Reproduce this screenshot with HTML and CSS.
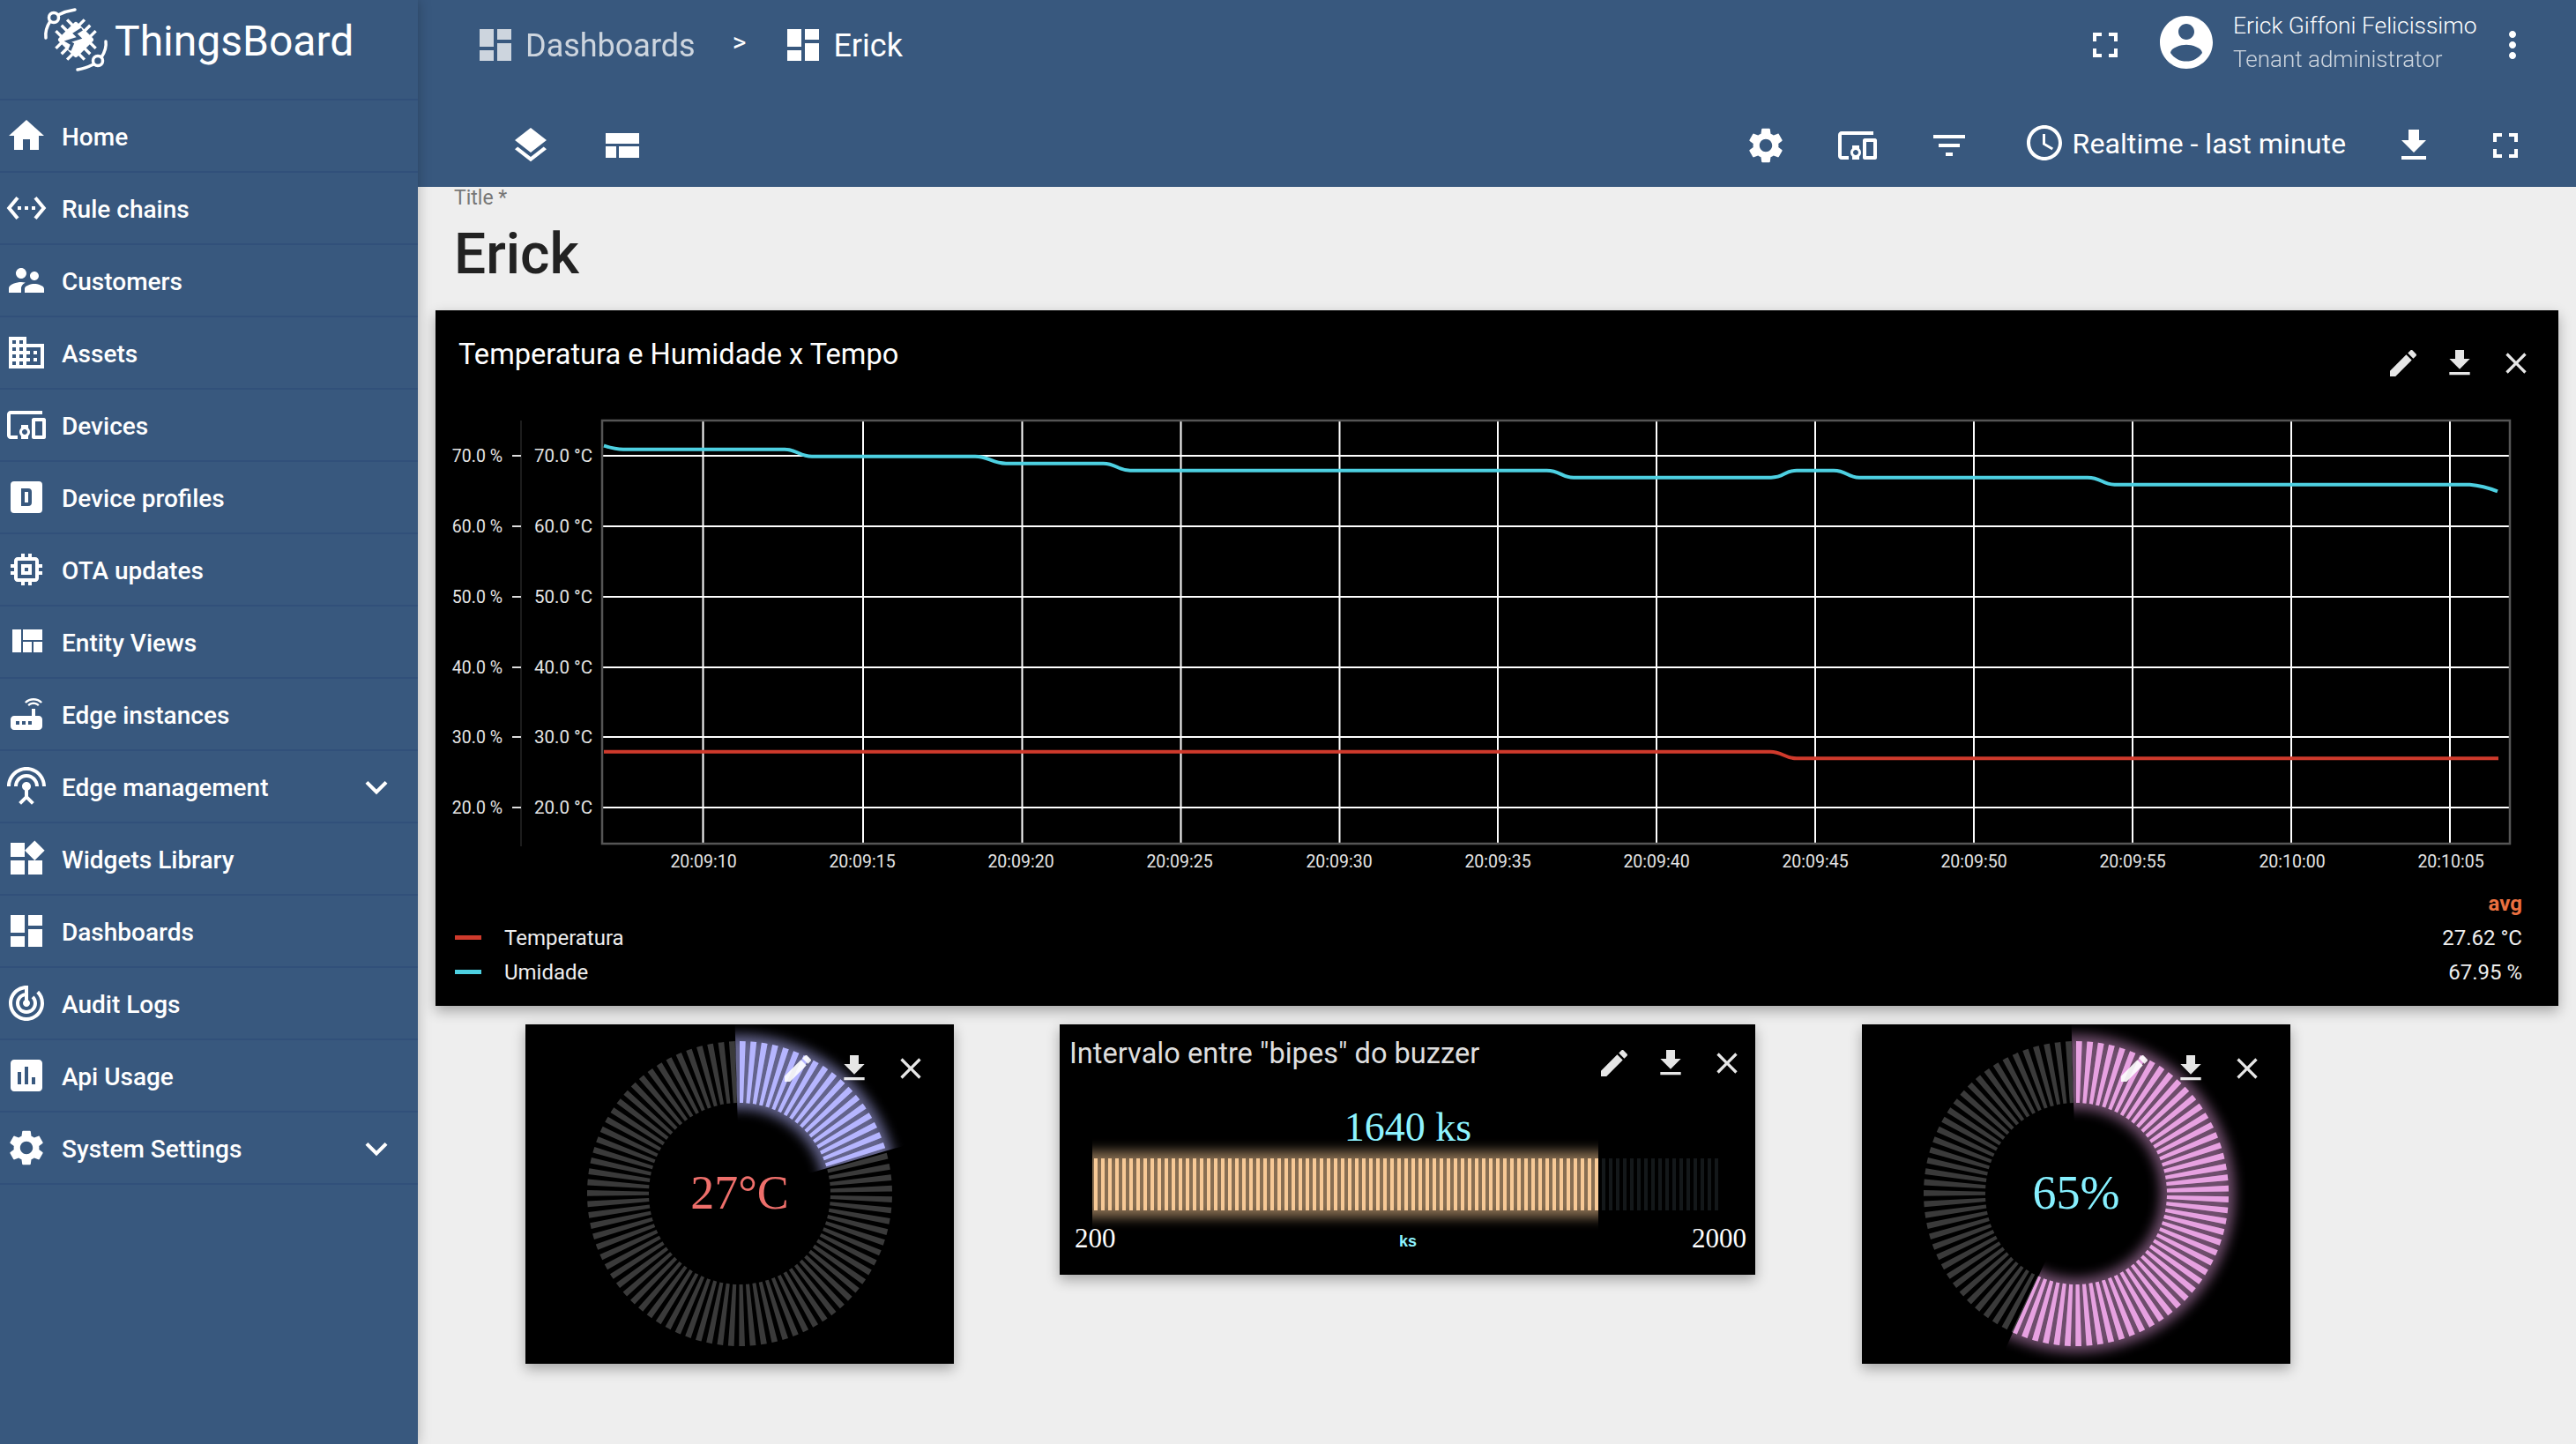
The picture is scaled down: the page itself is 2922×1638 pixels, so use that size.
FILE: index.html
```html
<!DOCTYPE html>
<html lang="en">
<head>
    <meta charset="UTF-8">
    <title>ThingsBoard | Erick</title>
    <link rel="stylesheet" href="styles.css">
</head>
<body>
    <!-- Material icons used across the page -->
    <svg class="sprite" xmlns="http://www.w3.org/2000/svg">
        <symbol id="i-home" viewBox="0 0 24 24"><path d="M10 20v-6h4v6h5v-8h3L12 3 2 12h3v8z"/></symbol>
        <symbol id="i-rule" viewBox="0 0 24 24"><path d="M7.77 6.76L6.23 5.48.82 12l5.41 6.52 1.54-1.28L3.42 12l4.35-5.24zM7 13h2v-2H7v2zm10-2h-2v2h2v-2zm-6 2h2v-2h-2v2zm6.77-7.52l-1.54 1.28L20.58 12l-4.35 5.24 1.54 1.28L23.18 12l-5.41-6.52z"/></symbol>
        <symbol id="i-customers" viewBox="0 0 24 24"><path d="M16.5 12c1.38 0 2.49-1.12 2.49-2.5S17.88 7 16.5 7C15.12 7 14 8.12 14 9.5s1.12 2.5 2.5 2.5zM9 11c1.66 0 2.99-1.34 2.99-3S10.66 5 9 5C7.34 5 6 6.34 6 8s1.34 3 3 3zm7.5 3c-1.83 0-5.5.92-5.5 2.75V19h11v-2.25c0-1.83-3.67-2.75-5.5-2.75zM9 13c-2.33 0-7 1.17-7 3.5V19h7v-2.25c0-.85.33-2.34 2.37-3.47C10.5 13.1 9.66 13 9 13z"/></symbol>
        <symbol id="i-assets" viewBox="0 0 24 24"><path d="M12 7V3H2v18h20V7H12zM6 19H4v-2h2v2zm0-4H4v-2h2v2zm0-4H4V9h2v2zm0-4H4V5h2v2zm4 12H8v-2h2v2zm0-4H8v-2h2v2zm0-4H8V9h2v2zm0-4H8V5h2v2zm10 12h-8v-2h2v-2h-2v-2h2v-2h-2V9h8v10zm-2-8h-2v2h2v-2zm0 4h-2v2h2v-2z"/></symbol>
        <symbol id="i-devices" viewBox="0 0 24 24"><path d="M3 6h18V4H3c-1.1 0-2 .9-2 2v12c0 1.1.9 2 2 2h4v-2H3V6zm10 6H9v1.78c-.61.55-1 1.33-1 2.22s.39 1.67 1 2.22V20h4v-1.78c.61-.55 1-1.34 1-2.22s-.39-1.67-1-2.22V12zm-2 5.5c-.83 0-1.5-.67-1.5-1.5s.67-1.5 1.5-1.5 1.5.67 1.5 1.5-.67 1.5-1.5 1.5zM22 8h-6c-.5 0-1 .5-1 1v10c0 .5.5 1 1 1h6c.5 0 1-.5 1-1V9c0-.5-.5-1-1-1zm-1 10h-4v-8h4v8z"/></symbol>
        <symbol id="i-profile" viewBox="0 0 24 24"><path d="M9,7V17H13A2,2 0 0,0 15,15V9A2,2 0 0,0 13,7H9M11,9H13V15H11V9M5,3H19A2,2 0 0,1 21,5V19A2,2 0 0,1 19,21H5A2,2 0 0,1 3,19V5A2,2 0 0,1 5,3Z"/></symbol>
        <symbol id="i-memory" viewBox="0 0 24 24"><path d="M15 9H9v6h6V9zm-2 4h-2v-2h2v2zm8-2V9h-2V7c0-1.1-.9-2-2-2h-2V3h-2v2h-2V3H9v2H7c-1.1 0-2 .9-2 2v2H3v2h2v2H3v2h2v2c0 1.1.9 2 2 2h2v2h2v-2h2v2h2v-2h2c1.1 0 2-.9 2-2v-2h2v-2h-2v-2h2zm-4 6H7V7h10v10z"/></symbol>
        <symbol id="i-quilt" viewBox="0 0 24 24"><path d="M10 18h5v-6h-5v6zm-6 0h5V5H4v13zm12 0h5v-6h-5v6zM10 5v6h11V5H10z"/></symbol>
        <symbol id="i-router" viewBox="0 0 24 24"><path d="M20.2 5.9l.8-.8C19.6 3.7 17.8 3 16 3s-3.6.7-5 2.1l.8.8C13 4.8 14.5 4.2 16 4.2s3 .6 4.2 1.7zm-.9.8c-.9-.9-2.1-1.4-3.3-1.4s-2.4.5-3.3 1.4l.8.8c.7-.7 1.6-1 2.5-1 .9 0 1.8.3 2.5 1l.8-.8zM19 13h-2V9h-2v4H5c-1.1 0-2 .9-2 2v4c0 1.1.9 2 2 2h14c1.1 0 2-.9 2-2v-4c0-1.1-.9-2-2-2zM8 18H6v-2h2v2zm3.5 0h-2v-2h2v2zm3.5 0h-2v-2h2v2z"/></symbol>
        <symbol id="i-antenna" viewBox="0 0 24 24"><path d="M12 5c-3.87 0-7 3.13-7 7h2c0-2.76 2.24-5 5-5s5 2.24 5 5h2c0-3.87-3.13-7-7-7zm1 9.29c.88-.39 1.5-1.26 1.5-2.29 0-1.38-1.12-2.5-2.5-2.5S9.5 10.62 9.5 12c0 1.02.62 1.9 1.5 2.29v3.3L7.59 21 9 22.41l3-3 3 3L16.41 21 13 17.59v-3.3zM12 1C5.93 1 1 5.93 1 12h2c0-4.97 4.03-9 9-9s9 4.03 9 9h2c0-6.07-4.93-11-11-11z"/></symbol>
        <symbol id="i-widgets" viewBox="0 0 24 24"><path d="M13 13v8h8v-8h-8zM3 21h8v-8H3v8zM3 3v8h8V3H3zm13.66-1.31L11 7.34 16.66 13l5.66-5.66-5.66-5.65z"/></symbol>
        <symbol id="i-dashboard" viewBox="0 0 24 24"><path d="M3 13h8V3H3v10zm0 8h8v-6H3v6zm10 0h8V11h-8v10zm0-18v6h8V3h-8z"/></symbol>
        <symbol id="i-audit" viewBox="0 0 24 24"><path d="M19.07 4.93l-1.41 1.41C19.1 7.79 20 9.79 20 12c0 4.42-3.58 8-8 8s-8-3.58-8-8c0-4.08 3.05-7.44 7-7.93v2.02C8.16 6.57 6 9.03 6 12c0 3.31 2.69 6 6 6s6-2.69 6-6c0-1.66-.67-3.16-1.76-4.24l-1.41 1.41C15.55 9.9 16 10.9 16 12c0 2.21-1.79 4-4 4s-4-1.79-4-4c0-1.86 1.28-3.41 3-3.86v2.14c-.6.35-1 .98-1 1.72 0 1.1.9 2 2 2s2-.9 2-2c0-.74-.4-1.38-1-1.72V2h-1C6.48 2 2 6.48 2 12s4.48 10 10 10 10-4.48 10-10c0-2.76-1.12-5.26-2.93-7.07z"/></symbol>
        <symbol id="i-usage" viewBox="0 0 24 24"><path d="M19 3H5c-1.1 0-2 .9-2 2v14c0 1.1.9 2 2 2h14c1.1 0 2-.9 2-2V5c0-1.1-.9-2-2-2zM9 17H7v-7h2v7zm4 0h-2V7h2v10zm4 0h-2v-4h2v4z"/></symbol>
        <symbol id="i-settings" viewBox="0 0 24 24"><path d="M19.14 12.94c.04-.3.06-.61.06-.94 0-.32-.02-.64-.07-.94l2.03-1.58c.18-.14.23-.41.12-.61l-1.92-3.32c-.12-.22-.37-.29-.59-.22l-2.39.96c-.5-.38-1.03-.7-1.62-.94l-.36-2.54c-.04-.24-.24-.41-.48-.41h-3.84c-.24 0-.43.17-.47.41l-.36 2.54c-.59.24-1.13.57-1.62.94l-2.39-.96c-.22-.08-.47 0-.59.22L2.74 8.87c-.12.21-.08.47.12.61l2.03 1.58c-.05.3-.09.63-.09.94s.02.64.07.94l-2.03 1.58c-.18.14-.23.41-.12.61l1.92 3.32c.12.22.37.29.59.22l2.39-.96c.5.38 1.03.7 1.62.94l.36 2.54c.05.24.24.41.48.41h3.84c.24 0 .44-.17.47-.41l.36-2.54c.59-.24 1.13-.56 1.62-.94l2.39.96c.22.08.47 0 .59-.22l1.92-3.32c.12-.22.07-.47-.12-.61l-2.01-1.58zM12 15.6c-1.98 0-3.6-1.62-3.6-3.6s1.62-3.6 3.6-3.6 3.6 1.62 3.6 3.6-1.62 3.6-3.6 3.6z"/></symbol>
        <symbol id="i-expand" viewBox="0 0 24 24"><path d="M16.59 8.59L12 13.17 7.41 8.59 6 10l6 6 6-6z"/></symbol>
        <symbol id="i-fullscreen" viewBox="0 0 24 24"><path d="M7 14H5v5h5v-2H7v-3zm-2-4h2V7h3V5H5v5zm12 7h-3v2h5v-5h-2v3zM14 5v2h3v3h2V5h-5z"/></symbol>
        <symbol id="i-account" viewBox="0 0 24 24"><path d="M12 2C6.48 2 2 6.48 2 12s4.48 10 10 10 10-4.48 10-10S17.52 2 12 2zm0 3c1.66 0 3 1.34 3 3s-1.34 3-3 3-3-1.34-3-3 1.34-3 3-3zm0 14.2c-2.5 0-4.71-1.28-6-3.22.03-1.99 4-3.08 6-3.08 1.99 0 5.97 1.09 6 3.08-1.29 1.94-3.5 3.22-6 3.22z"/></symbol>
        <symbol id="i-more" viewBox="0 0 24 24"><path d="M12 8c1.1 0 2-.9 2-2s-.9-2-2-2-2 .9-2 2 .9 2 2 2zm0 2c-1.1 0-2 .9-2 2s.9 2 2 2 2-.9 2-2-.9-2-2-2zm0 6c-1.1 0-2 .9-2 2s.9 2 2 2 2-.9 2-2-.9-2-2-2z"/></symbol>
        <symbol id="i-layers" viewBox="0 0 24 24"><path d="M11.99 18.54l-7.37-5.73L3 14.07l9 7 9-7-1.63-1.27-7.38 5.74zM12 16l7.36-5.73L21 9l-9-7-9 7 1.63 1.27L12 16z"/></symbol>
        <symbol id="i-layout" viewBox="0 0 24 24"><path d="M2.5 5h19v6h-19zM2.5 12.5h6V19h-6zM10 12.5h11.5V19H10z"/></symbol>
        <symbol id="i-filter" viewBox="0 0 24 24"><path d="M10 18h4v-2h-4v2zM3 6v2h18V6H3zm3 7h12v-2H6v2z"/></symbol>
        <symbol id="i-clock" viewBox="0 0 24 24"><path d="M11.99 2C6.47 2 2 6.48 2 12s4.47 10 9.99 10C17.52 22 22 17.52 22 12S17.52 2 11.99 2zM12 20c-4.42 0-8-3.58-8-8s3.58-8 8-8 8 3.58 8 8-3.58 8-8 8zm.5-13H11v6l5.25 3.15.75-1.23-4.5-2.67z"/></symbol>
        <symbol id="i-download" viewBox="0 0 24 24"><path d="M19 9h-4V3H9v6H5l7 7 7-7zM5 18v2h14v-2H5z"/></symbol>
        <symbol id="i-edit" viewBox="0 0 24 24"><path d="M3 17.25V21h3.75L17.81 9.94l-3.75-3.75L3 17.25zM20.71 7.04c.39-.39.39-1.02 0-1.41l-2.34-2.34c-.39-.39-1.02-.39-1.41 0l-1.83 1.83 3.75 3.75 1.83-1.83z"/></symbol>
        <symbol id="i-close" viewBox="0 0 24 24"><path d="M19 6.41L17.59 5 12 10.59 6.41 5 5 6.41 10.59 12 5 17.59 6.41 19 12 13.41 17.59 19 19 17.59 13.41 12z"/></symbol>
    </svg>

    <aside class="sidebar">
        <div class="logo">
            <svg class="logo-mark" viewBox="48 10 76 76">
                <g class="logo-lines">
                    <circle cx="61" cy="23" r="5.5"/>
                    <circle cx="111" cy="72" r="5.5"/>
                    <path d="M52 46c-1-8 1-13 5-19M66 20c6-3 12-5 19-6M120 50c1 7-1 12-5 18M106 76c-6 3-11 5-18 6"/>
                </g>
                <g transform="rotate(45 86 48)">
                    <rect x="71" y="33" width="30" height="30" rx="3" fill="#fff"/>
                    <path class="logo-pins" d="M77 25v46M86 25v46M95 25v46M63 39h46M63 48h46M63 57h46"/>
                </g>
                <path class="logo-bolt" d="M93 36l-8 5 5 5-13 4 5 3-3 7"/>
            </svg>
            <span class="logo-text">ThingsBoard</span>
        </div>
        <nav class="nav">
            <a class="nav-item"><svg class="icon"><use href="#i-home"/></svg><span>Home</span></a>
            <a class="nav-item"><svg class="icon"><use href="#i-rule"/></svg><span>Rule chains</span></a>
            <a class="nav-item"><svg class="icon"><use href="#i-customers"/></svg><span>Customers</span></a>
            <a class="nav-item"><svg class="icon"><use href="#i-assets"/></svg><span>Assets</span></a>
            <a class="nav-item"><svg class="icon"><use href="#i-devices"/></svg><span>Devices</span></a>
            <a class="nav-item"><svg class="icon"><use href="#i-profile"/></svg><span>Device profiles</span></a>
            <a class="nav-item"><svg class="icon"><use href="#i-memory"/></svg><span>OTA updates</span></a>
            <a class="nav-item"><svg class="icon"><use href="#i-quilt"/></svg><span>Entity Views</span></a>
            <a class="nav-item"><svg class="icon"><use href="#i-router"/></svg><span>Edge instances</span></a>
            <a class="nav-item"><svg class="icon"><use href="#i-antenna"/></svg><span>Edge management</span><svg class="chevron"><use href="#i-expand"/></svg></a>
            <a class="nav-item"><svg class="icon"><use href="#i-widgets"/></svg><span>Widgets Library</span></a>
            <a class="nav-item"><svg class="icon"><use href="#i-dashboard"/></svg><span>Dashboards</span></a>
            <a class="nav-item"><svg class="icon"><use href="#i-audit"/></svg><span>Audit Logs</span></a>
            <a class="nav-item"><svg class="icon"><use href="#i-usage"/></svg><span>Api Usage</span></a>
            <a class="nav-item"><svg class="icon"><use href="#i-settings"/></svg><span>System Settings</span><svg class="chevron"><use href="#i-expand"/></svg></a>
        </nav>
    </aside>

    <main class="main">
        <header class="toolbar">
            <div class="toolbar-top">
                <svg class="icon dim"><use href="#i-dashboard"/></svg>
                <span class="crumb dim">Dashboards</span>
                <span class="crumb-sep">&gt;</span>
                <svg class="icon"><use href="#i-dashboard"/></svg>
                <span class="crumb">Erick</span>
                <svg class="icon push"><use href="#i-fullscreen"/></svg>
                <svg class="avatar"><use href="#i-account"/></svg>
                <div class="user-info">
                    <div class="user-name">Erick Giffoni Felicissimo</div>
                    <div class="user-role">Tenant administrator</div>
                </div>
                <svg class="icon"><use href="#i-more"/></svg>
            </div>
            <div class="toolbar-bottom">
                <svg class="icon"><use href="#i-layers"/></svg>
                <svg class="icon"><use href="#i-layout"/></svg>
                <svg class="icon push"><use href="#i-settings"/></svg>
                <svg class="icon"><use href="#i-devices"/></svg>
                <svg class="icon"><use href="#i-filter"/></svg>
                <div class="timewindow">
                    <svg class="icon"><use href="#i-clock"/></svg>
                    <span>Realtime - last minute</span>
                </div>
                <svg class="icon"><use href="#i-download"/></svg>
                <svg class="icon"><use href="#i-fullscreen"/></svg>
            </div>
        </header>

        <div class="content">
            <div class="title-block">
                <div class="title-label">Title *</div>
                <div class="title-value">Erick</div>
            </div>

            <section class="widget chart-widget">
                <div class="widget-title">Temperatura e Humidade x Tempo</div>
                <div class="widget-actions">
                    <svg><use href="#i-edit"/></svg>
                    <svg><use href="#i-download"/></svg>
                    <svg><use href="#i-close"/></svg>
                </div>
                <svg class="chart" viewBox="494 470 2408 530" width="2408" height="530">
                    <path class="axis-left" d="M591 477V960"/>
                    <path class="tick" d="M581 517h10M581 597h10M581 677h10M581 757h10M581 836h10M581 916h10"/>
                    <path class="grid" d="M684 517H2846M684 597H2846M684 677H2846M684 757H2846M684 836H2846M684 916H2846M797.5 478V956M979 478V956M1159.5 478V956M1339.5 478V956M1519.5 478V956M1699 478V956M1879 478V956M2059 478V956M2239 478V956M2419 478V956M2599 478V956M2779 478V956"/>
                    <rect class="plot-border" x="683" y="477" width="2164" height="480"/>
                    <path class="series-temp" d="M685 852.7H2008C2022 852.7 2024 860.3 2038 860.3H2834"/>
                    <path class="series-hum" d="M685 505.5C693 508 698 509.7 707 509.7H890C904 509.7 907 517.7 921 517.7H1106C1122 517.7 1125 525.7 1141 525.7H1251.5C1266 525.7 1268 533.7 1282 533.7H1754.5C1770 533.7 1771 541.7 1785 541.7H2009C2024 541.7 2024 533.7 2038 533.7H2080C2095 533.7 2095 541.7 2109 541.7H2368C2384 541.7 2384 549.7 2398.5 549.7H2801.5C2812 550.5 2822 553 2833 557.3"/>
                    <g class="axis-text end">
                        <text x="570" y="524">70.0 %</text>
                        <text x="570" y="604">60.0 %</text>
                        <text x="570" y="684">50.0 %</text>
                        <text x="570" y="764">40.0 %</text>
                        <text x="570" y="843">30.0 %</text>
                        <text x="570" y="923">20.0 %</text>
                    </g>
                    <g class="axis-text end wide">
                        <text x="672" y="524">70.0 °C</text>
                        <text x="672" y="604">60.0 °C</text>
                        <text x="672" y="684">50.0 °C</text>
                        <text x="672" y="764">40.0 °C</text>
                        <text x="672" y="843">30.0 °C</text>
                        <text x="672" y="923">20.0 °C</text>
                    </g>
                    <g class="axis-text middle">
                        <text x="798" y="984">20:09:10</text>
                        <text x="978" y="984">20:09:15</text>
                        <text x="1158" y="984">20:09:20</text>
                        <text x="1338" y="984">20:09:25</text>
                        <text x="1519" y="984">20:09:30</text>
                        <text x="1699" y="984">20:09:35</text>
                        <text x="1879" y="984">20:09:40</text>
                        <text x="2059" y="984">20:09:45</text>
                        <text x="2239" y="984">20:09:50</text>
                        <text x="2419" y="984">20:09:55</text>
                        <text x="2600" y="984">20:10:00</text>
                        <text x="2780" y="984">20:10:05</text>
                    </g>
                </svg>
                <div class="legend">
                    <span></span><span></span><span class="legend-head">avg</span>
                    <i class="swatch temp"></i><span>Temperatura</span><span>27.62 °C</span>
                    <i class="swatch hum"></i><span>Umidade</span><span>67.95 %</span>
                </div>
            </section>

            <div class="widget-row">
                <section class="widget gauge-widget">
                    <div class="widget-actions">
                        <svg><use href="#i-edit"/></svg>
                        <svg><use href="#i-download"/></svg>
                        <svg><use href="#i-close"/></svg>
                    </div>
                    <svg class="gauge" viewBox="-243 -192 486 385" width="486" height="385">
                        <defs>
                            <filter id="glow-a" x="-50%" y="-50%" width="200%" height="200%"><feGaussianBlur stdDeviation="7"/></filter>
                            <clipPath id="clip-a"><polygon points="0,0 -8.4,-300 300,-300 288,-84"/></clipPath>
                        </defs>
                        <circle class="ring ring-off" r="138" transform="rotate(-90)"/>
                        <g clip-path="url(#clip-a)">
                            <circle class="glow glow-lilac" r="138" filter="url(#glow-a)"/>
                            <circle class="ring ring-lilac" r="138" transform="rotate(-90)"/>
                        </g>
                        <text class="gauge-value temp-value" x="0" y="17">27°C</text>
                    </svg>
                </section>

                <section class="widget bar-widget">
                    <div class="bar-title">Intervalo entre "bipes" do buzzer</div>
                    <div class="widget-actions">
                        <svg><use href="#i-edit"/></svg>
                        <svg><use href="#i-download"/></svg>
                        <svg><use href="#i-close"/></svg>
                    </div>
                    <svg class="bar" viewBox="1202 1220 789 226" width="789" height="226">
                        <defs>
                            <filter id="glow-b" x="-10%" y="-100%" width="120%" height="300%"><feGaussianBlur stdDeviation="7"/></filter>
                            <clipPath id="clip-b"><rect x="1239" y="1280" width="574" height="120"/></clipPath>
                        </defs>
                        <path class="bar-off" d="M1241 1343.5H1949"/>
                        <g clip-path="url(#clip-b)">
                            <rect class="glow-peach" x="1225" y="1306" width="600" height="75" filter="url(#glow-b)"/>
                            <path class="bar-on" d="M1241 1343.5H1949"/>
                        </g>
                        <text class="bar-value" x="1597" y="1294">1640 ks</text>
                        <text class="bar-limit" x="1219" y="1415">200</text>
                        <text class="bar-limit end" x="1981" y="1415">2000</text>
                        <text class="bar-unit" x="1597" y="1414">ks</text>
                    </svg>
                </section>

                <section class="widget gauge-widget">
                    <div class="widget-actions">
                        <svg><use href="#i-edit"/></svg>
                        <svg><use href="#i-download"/></svg>
                        <svg><use href="#i-close"/></svg>
                    </div>
                    <svg class="gauge" viewBox="-243 -192 486 385" width="486" height="385">
                        <defs>
                            <filter id="glow-c" x="-50%" y="-50%" width="200%" height="200%"><feGaussianBlur stdDeviation="7"/></filter>
                            <clipPath id="clip-c"><polygon points="0,0 -8.4,-300 300,-300 300,300 -124.4,273"/></clipPath>
                        </defs>
                        <circle class="ring ring-off" r="138" transform="rotate(-90)"/>
                        <g clip-path="url(#clip-c)">
                            <circle class="glow glow-pink" r="138" filter="url(#glow-c)"/>
                            <circle class="ring ring-pink" r="138" transform="rotate(-90)"/>
                        </g>
                        <text class="gauge-value hum-value" x="0" y="17">65%</text>
                    </svg>
                </section>
            </div>
        </div>
    </main>
</body>
</html>
```

FILE: styles.css
```css
* {
    box-sizing: border-box;
}
html, body {
    margin: 0;
    height: 100%;
}
body {
    display: flex;
    width: 2922px;
    height: 1638px;
    overflow: hidden;
    background: #eeeeee;
    font-family: Roboto, 'Liberation Sans', sans-serif;
    color: #fff;
}
.sprite {
    display: none;
}
.icon {
    width: 48px;
    height: 48px;
    flex: none;
    fill: #fff;
}

/* Sidebar */
.sidebar {
    width: 474px;
    flex: none;
    background: #38587e;
    box-shadow: 0 0 14px rgba(0, 0, 0, 0.25);
    position: relative;
    z-index: 2;
}
.logo {
    height: 114px;
    padding: 0 0 22px 48px;
    display: flex;
    align-items: center;
    gap: 6px;
    border-bottom: 2px solid #31507a;
}
.logo-mark {
    width: 76px;
    height: 76px;
}
.logo-lines {
    fill: none;
    stroke: #fff;
    stroke-width: 3.5;
    stroke-linecap: round;
}
.logo-pins {
    fill: none;
    stroke: #fff;
    stroke-width: 3.4;
}
.logo-bolt {
    fill: none;
    stroke: #38587e;
    stroke-width: 3.5;
}
.logo-text {
    font-size: 48px;
    line-height: 1;
    margin-top: 3px;
}
.nav-item {
    height: 82px;
    display: flex;
    align-items: center;
    padding: 2px 0 0 6px;
    gap: 16px;
    border-bottom: 2px solid #31507a;
    font-size: 28px;
    font-weight: 500;
}
.nav-item .icon {
    margin-top: -2px;
}
.chevron {
    width: 50px;
    height: 50px;
    margin-left: auto;
    margin-right: 22px;
    fill: #fff;
}

/* Toolbar */
.main {
    flex: 1;
    display: flex;
    flex-direction: column;
    min-width: 0;
}
.toolbar {
    height: 212px;
    background: #38587e;
    flex: none;
}
.toolbar-top {
    height: 102px;
    display: flex;
    align-items: center;
    padding: 0 48px 0 64px;
}
.toolbar-bottom {
    height: 110px;
    display: flex;
    align-items: center;
    padding: 16px 56px 0 104px;
    gap: 56px;
}
.dim {
    opacity: 0.75;
}
.crumb {
    font-size: 36px;
    margin: 2px 0 0 10px;
}
.crumb-sep {
    font-size: 30px;
    margin: -8px 41px 0 42px;
}
.push {
    margin-left: auto;
}
.avatar {
    width: 72px;
    height: 72px;
    margin: -6px 17px 0 32px;
    fill: #fff;
}
.user-info {
    width: 293px;
    margin-top: -6px;
}
.user-name {
    font-size: 26.4px;
    line-height: 38px;
    font-weight: 300;
}
.user-role {
    font-size: 26px;
    line-height: 38px;
    font-weight: 300;
    opacity: 0.75;
}
.timewindow {
    display: flex;
    align-items: center;
    gap: 8px;
    font-size: 32.2px;
    margin-left: 4px;
    margin-right: -3px;
}
.timewindow .icon {
    margin-top: -6px;
}
.timewindow span {
    margin-top: -5px;
}

/* Dashboard area */
.content {
    flex: 1;
    padding: 0 20px;
}
.title-block {
    height: 140px;
    padding-left: 21px;
}
.title-label {
    font-size: 23px;
    line-height: 26px;
    color: #777;
}
.title-value {
    font-size: 64px;
    font-weight: 500;
    line-height: 76px;
    margin-top: 13px;
    color: #222;
}
.widget {
    position: relative;
    background: #000;
    box-shadow: 0 6px 14px rgba(0, 0, 0, 0.3);
    overflow: hidden;
}
.widget-actions {
    position: absolute;
    top: 30px;
    right: 29px;
    display: flex;
    gap: 24px;
    z-index: 1;
}
.widget-actions svg {
    width: 40px;
    height: 40px;
    fill: #fff;
    opacity: 0.9;
}
.chart-widget {
    height: 789px;
}
.chart-widget .widget-actions {
    top: 40px;
    right: 28px;
}
.widget-title {
    height: 118px;
    padding: 32px 0 0 26px;
    font-size: 32.6px;
    line-height: 36px;
}
.chart {
    display: block;
}
.axis-left {
    stroke: #1c1c1c;
    stroke-width: 2;
}
.tick {
    stroke: #ddd;
    stroke-width: 2;
}
.grid {
    stroke: #fff;
    stroke-width: 2;
    fill: none;
}
.plot-border {
    fill: none;
    stroke: #555;
    stroke-width: 2.5;
}
.series-temp {
    fill: none;
    stroke: #cf3a2c;
    stroke-width: 4;
}
.series-hum {
    fill: none;
    stroke: #4dd0e1;
    stroke-width: 4;
}
.axis-text text {
    font-size: 19.5px;
    fill: #e4e4e4;
}
.axis-text.end text {
    text-anchor: end;
}
.axis-text.wide text {
    font-size: 20.5px;
}
.axis-text.middle text {
    text-anchor: middle;
}
.legend {
    display: grid;
    grid-template-columns: 30px 1fr auto;
    column-gap: 26px;
    grid-auto-rows: 39px;
    align-items: center;
    padding: 5px 41px 0 22px;
    font-size: 24px;
    color: #eee;
}
.legend span:nth-child(3n) {
    text-align: right;
}
.legend .legend-head {
    color: #ea7040;
    font-weight: 700;
}
.swatch {
    display: block;
    height: 5px;
}
.swatch.temp {
    background: #cf3a2c;
}
.swatch.hum {
    background: #4dd0e1;
}

/* Small widgets */
.widget-row {
    display: flex;
    align-items: flex-start;
    margin-top: 21px;
    padding-left: 102px;
    gap: 120px;
}
.gauge-widget {
    width: 486px;
    height: 385px;
    flex: none;
}
.gauge-widget:last-child {
    margin-left: 1px;
}
.gauge {
    display: block;
}
.ring {
    fill: none;
    stroke-width: 70;
    stroke-dasharray: 5.4 4.566;
}
.ring-off {
    stroke: #3a3a3a;
}
.ring-lilac {
    stroke: #b5b5ff;
}
.ring-pink {
    stroke: #e7a1e1;
}
.glow {
    fill: none;
    stroke-width: 84;
}
.glow-lilac {
    stroke: #b5b5ff;
    opacity: 0.55;
}
.glow-pink {
    stroke: #e7a1e1;
    opacity: 0.48;
}
.gauge-value {
    font-family: 'Liberation Serif', serif;
    font-size: 54px;
    text-anchor: middle;
}
.temp-value {
    fill: #ee6f6b;
}
.hum-value {
    fill: #86f0ff;
}
.bar-widget {
    width: 789px;
    height: 284px;
    flex: none;
}
.bar-widget .widget-actions {
    top: 24px;
    right: 12px;
}
.bar-title {
    height: 58px;
    padding: 15px 0 0 11px;
    font-size: 32.6px;
    line-height: 36px;
    color: #dedede;
}
.bar {
    display: block;
}
.bar-off, .bar-on {
    fill: none;
    stroke-width: 59;
    stroke-dasharray: 4 4;
}
.bar-off {
    stroke: #14181a;
}
.bar-on {
    stroke: #f7c996;
}
.glow-peach {
    fill: #f7c996;
    opacity: 0.55;
}
.bar-value {
    font-family: 'Liberation Serif', serif;
    font-size: 46px;
    text-anchor: middle;
    fill: #8ef3ff;
}
.bar-limit {
    font-family: 'Liberation Serif', serif;
    font-size: 31px;
    fill: #fff;
}
.bar-limit.end {
    text-anchor: end;
}
.bar-unit {
    font-family: 'Liberation Sans', sans-serif;
    font-size: 18px;
    font-weight: 700;
    text-anchor: middle;
    fill: #8ef3ff;
}
```
